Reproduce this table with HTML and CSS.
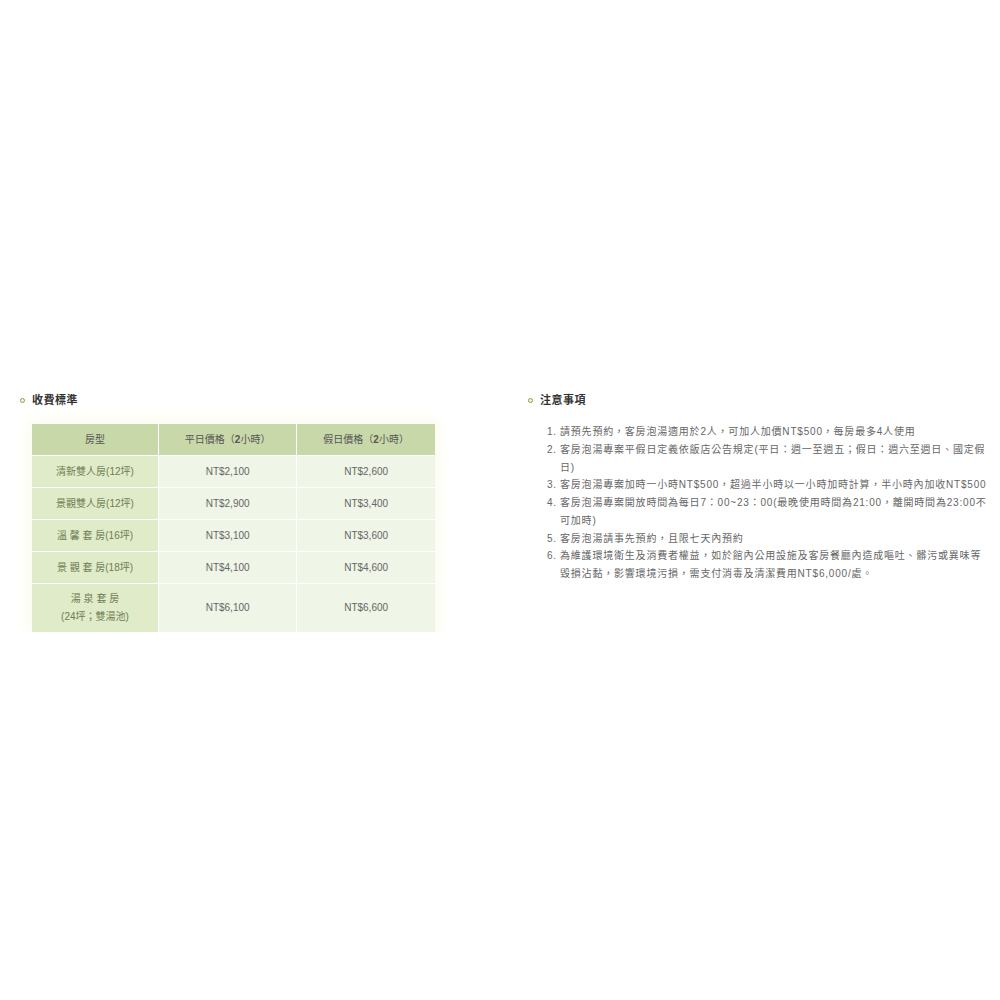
FILE: index.html
```html
<!DOCTYPE html>
<html lang="zh-Hant">
<head>
<meta charset="utf-8">
<title>收費標準</title>
<link rel="stylesheet" href="styles.css">
</head>
<body>
<div class="page">
  <section class="col col-left">
    <h2 class="title"><span class="dot"></span>收費標準</h2>
    <div class="table-wrap">
      <table class="price">
        <thead>
          <tr><th class="c1">房型</th><th>平日價格（<b>2</b>小時）</th><th>假日價格（<b>2</b>小時）</th></tr>
        </thead>
        <tbody>
          <tr><td class="c1">清新雙人房(12坪)</td><td>NT$2,100</td><td>NT$2,600</td></tr>
          <tr><td class="c1">景觀雙人房(12坪)</td><td>NT$2,900</td><td>NT$3,400</td></tr>
          <tr><td class="c1">溫 馨 套 房(16坪)</td><td>NT$3,100</td><td>NT$3,600</td></tr>
          <tr><td class="c1">景 觀 套 房(18坪)</td><td>NT$4,100</td><td>NT$4,600</td></tr>
          <tr class="tall"><td class="c1">湯 泉 套 房<br>(24坪；雙湯池)</td><td>NT$6,100</td><td>NT$6,600</td></tr>
        </tbody>
      </table>
    </div>
  </section>
  <section class="col col-right">
    <h2 class="title"><span class="dot"></span>注意事項</h2>
    <ol class="notes">
      <li><span class="num">1.</span><span class="txt">請預先預約，客房泡湯適用於2人，可加人加價NT$500，每房最多4人使用</span></li>
      <li><span class="num">2.</span><span class="txt">客房泡湯專案平假日定義依飯店公告規定(平日：週一至週五；假日：週六至週日、國定假日)</span></li>
      <li><span class="num">3.</span><span class="txt">客房泡湯專案加時一小時NT$500，超過半小時以一小時加時計算，半小時內加收NT$500</span></li>
      <li><span class="num">4.</span><span class="txt">客房泡湯專案開放時間為每日7：00~23：00(最晚使用時間為21:00，離開時間為23:00不可加時)</span></li>
      <li><span class="num">5.</span><span class="txt">客房泡湯請事先預約，且限七天內預約</span></li>
      <li><span class="num">6.</span><span class="txt">為維護環境衛生及消費者權益，如於館內公用設施及客房餐廳內造成嘔吐、髒污或異味等毀損沾黏，影響環境污損，需支付消毒及清潔費用NT$6,000/處。</span></li>
    </ol>
  </section>
</div>
</body>
</html>
```
FILE: styles.css
```css
html, body {
  margin: 0;
  padding: 0;
  background: #ffffff;
}
body {
  font-family: "Liberation Sans", "Noto Sans CJK TC", sans-serif;
  color: #666;
}
.page {
  display: flex;
  padding-top: 392px;
}
.col-left {
  width: 500px;
  padding-left: 20px;
  box-sizing: border-box;
}
.col-right {
  width: 490px;
  padding-left: 28px;
  box-sizing: border-box;
}
.title {
  margin: 0;
  display: flex;
  align-items: center;
  gap: 7px;
  font-size: 11px;
  line-height: 16px;
  font-weight: bold;
  color: #333;
  letter-spacing: 0.5px;
}
.dot {
  width: 3px;
  height: 3px;
  border: 1.5px solid #8d9c3e;
  border-radius: 50%;
  background: #f4f6de;
  flex: none;
}
.table-wrap {
  margin: 16px 0 0 12px;
  width: 403px;
  box-shadow: 0 0 14px 5px #fbfcee;
}
.price {
  width: 403px;
  border-collapse: collapse;
  table-layout: fixed;
  font-size: 10px;
  text-align: center;
}
.price th, .price td {
  border: 1px solid #ffffff;
  padding: 0;
  height: 31px;
  line-height: 18px;
}
.price th {
  background: #c9d8a9;
  color: #555;
  font-weight: normal;
}
.price th b {
  font-weight: bold;
}
.price th.c1 { width: 126px; }
.price td {
  background: #eff5e7;
  color: #666;
}
.price td.c1 {
  background: #e0ebc9;
  color: #6e7c52;
}
.price tr.tall td {
  height: 48px;
}
.price thead tr th { border-top: 0; }
.price tr th:first-child, .price tr td:first-child { border-left: 0; }
.price tr th:last-child, .price tr td:last-child { border-right: 0; }
.price tbody tr:last-child td { border-bottom: 0; }
.notes {
  list-style: none;
  margin: 15px 0 0 0;
  padding: 0 0 0 19px;
  font-size: 10px;
  line-height: 17.75px;
  letter-spacing: 0.8px;
  color: #666;
  width: 463px;
  box-sizing: border-box;
}
.notes li {
  display: flex;
}
.num {
  width: 13px;
  flex: none;
}
.txt {
  flex: 1;
}
```
